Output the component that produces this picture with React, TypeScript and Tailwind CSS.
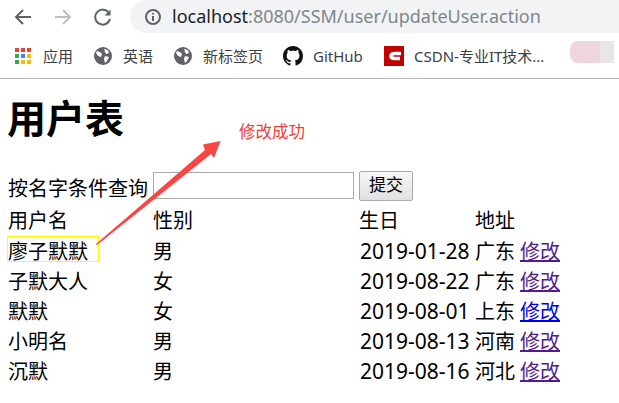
import React from "react";

const F = { fontFamily: '"Liberation Sans", "Noto Sans CJK SC", sans-serif' } as const;
const N = { fontFamily: '"Noto Sans", "Noto Sans CJK SC", sans-serif' } as const;

function Globe() {
  return (
    <svg width="18" height="18" viewBox="0 0 18 18" className="shrink-0">
      <circle cx="9" cy="9" r="9" fill="#5f6368" />
      <path d="M3 4l3 1 2 2-1 3-3-1-2-3zM10 2l4 1 1 3-3 1-1-2zM11 9l4 1-2 4-2 2-1-4z" fill="#fff" />
    </svg>
  );
}

function Bm({ icon, label, w, iw }: { icon: React.ReactNode; label: string; w: string; iw: string }) {
  return (
    <div className={`flex items-center ${w}`}>
      <div className={`${iw} shrink-0 flex`}>{icon}</div>
      <span style={N} className="text-[15px] text-[#3c4043] whitespace-nowrap">{label}</span>
    </div>
  );
}

const rows = [
  ["廖子默默", "男", "2019-01-28", "广东", "#551a8b"],
  ["子默大人", "女", "2019-08-22", "广东", "#551a8b"],
  ["默默", "女", "2019-08-01", "上东", "#0000ee"],
  ["小明名", "男", "2019-08-13", "河南", "#551a8b"],
  ["沉默", "男", "2019-08-16", "河北", "#551a8b"],
];

function Row({ c }: { c: React.ReactNode[] }) {
  return (
    <div className="grid grid-cols-[145px_206px_116px_45px_auto] h-[30px] items-center">
      {c.map((x, i) => (
        <div key={i} className="whitespace-nowrap">{x}</div>
      ))}
    </div>
  );
}

export default function App() {
  return (
    <div style={F} className="relative w-[619px] h-[403px] overflow-hidden bg-white text-black">
      <div className="h-[33px] flex items-center pl-[14px]">
        <svg width="18" height="18" viewBox="0 0 18 18" fill="none" stroke="#5f6368" strokeWidth="2">
          <path d="M17 9H2M9 2L2 9l7 7" />
        </svg>
        <svg width="18" height="18" viewBox="0 0 18 18" fill="none" stroke="#bdc1c6" strokeWidth="2" className="ml-[22px]">
          <path d="M1 9h15M9 2l7 7-7 7" />
        </svg>
        <svg width="18" height="18" viewBox="0 0 18 18" fill="none" stroke="#5f6368" strokeWidth="2" className="ml-[22px]">
          <path d="M15 5a7.5 7.5 0 1 0 1 6" />
          <path d="M16.5 1.5v6h-6z" fill="#5f6368" stroke="none" />
        </svg>
        <div className="ml-[18px] flex-1 h-[33px] bg-[#f1f3f4] rounded-l-[17px] flex items-center pl-[14px]">
          <svg width="18" height="18" viewBox="0 0 18 18" fill="none" stroke="#5f6368" strokeWidth="2">
            <circle cx="9" cy="9" r="7" />
            <path d="M9 8v5M9 5v1.6" />
          </svg>
          <span style={N} className="ml-[10px] text-[18px] text-[#80868b] whitespace-nowrap">
            <span className="text-[#202124]">localhost</span>:8080/SSM/user/updateUser.action
          </span>
        </div>
      </div>

      <div className="h-[46px] border-b border-[#b8b8b8] flex items-center pl-[15px] pt-[1px] relative">
        <Bm
          w="w-[79px]"
          iw="w-[28px]"
          label="应用"
          icon={
            <div className="grid grid-cols-3 gap-[2px] w-[16px]">
              {["#ea4335", "#ea4335", "#ea4335", "#34a853", "#4285f4", "#fbbc04", "#34a853", "#fbbc04", "#fbbc04"].map((c, i) => (
                <div key={i} className="w-[4px] h-[4px]" style={{ background: c }} />
              ))}
            </div>
          }
        />
        <Bm w="w-[80px]" iw="w-[29px]" label="英语" icon={<Globe />} />
        <Bm w="w-[109px]" iw="w-[29px]" label="新标签页" icon={<Globe />} />
        <Bm
          w="w-[101px]"
          iw="w-[30px]"
          label="GitHub"
          icon={
            <svg width="20" height="20" viewBox="0 0 16 16" fill="#111">
              <path d="M8 0C3.58 0 0 3.58 0 8c0 3.54 2.29 6.53 5.47 7.59.4.07.55-.17.55-.38 0-.19-.01-.82-.01-1.49-2.01.37-2.53-.49-2.69-.94-.09-.23-.48-.94-.82-1.13-.28-.15-.68-.52-.01-.53.63-.01 1.08.58 1.23.82.72 1.21 1.87.87 2.33.66.07-.52.28-.87.51-1.07-1.78-.2-3.64-.89-3.64-3.95 0-.87.31-1.59.82-2.15-.08-.2-.36-1.02.08-2.12 0 0 .67-.21 2.2.82.64-.18 1.32-.27 2-.27s1.36.09 2 .27c1.53-1.04 2.2-.82 2.2-.82.44 1.1.16 1.92.08 2.12.51.56.82 1.27.82 2.15 0 3.07-1.87 3.75-3.65 3.95.29.25.54.73.54 1.48 0 1.07-.01 1.93-.01 2.2 0 .21.15.46.55.38A8.01 8.01 0 0 0 16 8c0-4.42-3.58-8-8-8z" />
            </svg>
          }
        />
        <Bm
          w="w-[185px]"
          iw="w-[30px]"
          label="CSDN-专业IT技术..."
          icon={
            <svg width="20" height="20" viewBox="0 0 20 20">
              <rect width="20" height="20" fill="#c30000" />
              <path d="M17 7.5h-6c-3 0-4 1-4 2.5s1 2.5 4 2.5h5" fill="none" stroke="#fff" strokeWidth="3.6" />
            </svg>
          }
        />
        <div className="absolute left-[570px] top-[8px] w-[49px] h-[22px] flex">
          <div className="w-[30px] h-full rounded-l-[8px] bg-[#efd5de]" />
          <div className="w-[14px] h-full bg-[#e9e6e4]" />
        </div>
      </div>

      <div className="px-[8px] relative">
        <h1 className="text-[39px] font-bold leading-[46px] mt-[18px] mb-[27px] -ml-[1px]">用户表</h1>
        <div className="flex items-center h-[31px] text-[20px]">
          <span className="relative top-[3px]">按名字条件查询</span>
          <input className="ml-[5px] w-[201px] h-[27px] border border-[#a9a9a9] bg-white" aria-label="name" />
          <button className="ml-[5px] w-[54px] h-[30px] border border-[#a9a9a9] rounded-[2px] bg-gradient-to-b from-[#f7f7f7] to-[#e0e0e0] text-[17px] leading-none">
            提交
          </button>
        </div>
        <div className="text-[20px] mt-[5px]">
          <Row c={["用户名", "性别", "生日", "地址", ""]} />
          {rows.map((r) => (
            <Row
              key={r[0]}
              c={[
                r[0],
                r[1],
                <span key="d" style={N} className="text-[21px] pl-[1px]">{r[2]}</span>,
                r[3],
                <a key="a" href="#" className="underline" style={{ color: r[4] }}>修改</a>,
              ]}
            />
          ))}
        </div>
      </div>

      <div className="absolute left-[7px] top-[236px] w-[92px] h-[26px] border border-[#ffff00]" />
      <svg className="absolute left-0 top-0 pointer-events-none" width="619" height="403">
        <path d="M96 244 L205 150 L203 144.5 L220.5 141 L214 158 L211 154 L97 245 Z" fill="#fb4444" />
      </svg>
      <div className="absolute left-[239px] top-[122px] text-[16.5px] leading-[20px] text-[#f04040]">修改成功</div>
    </div>
  );
}
